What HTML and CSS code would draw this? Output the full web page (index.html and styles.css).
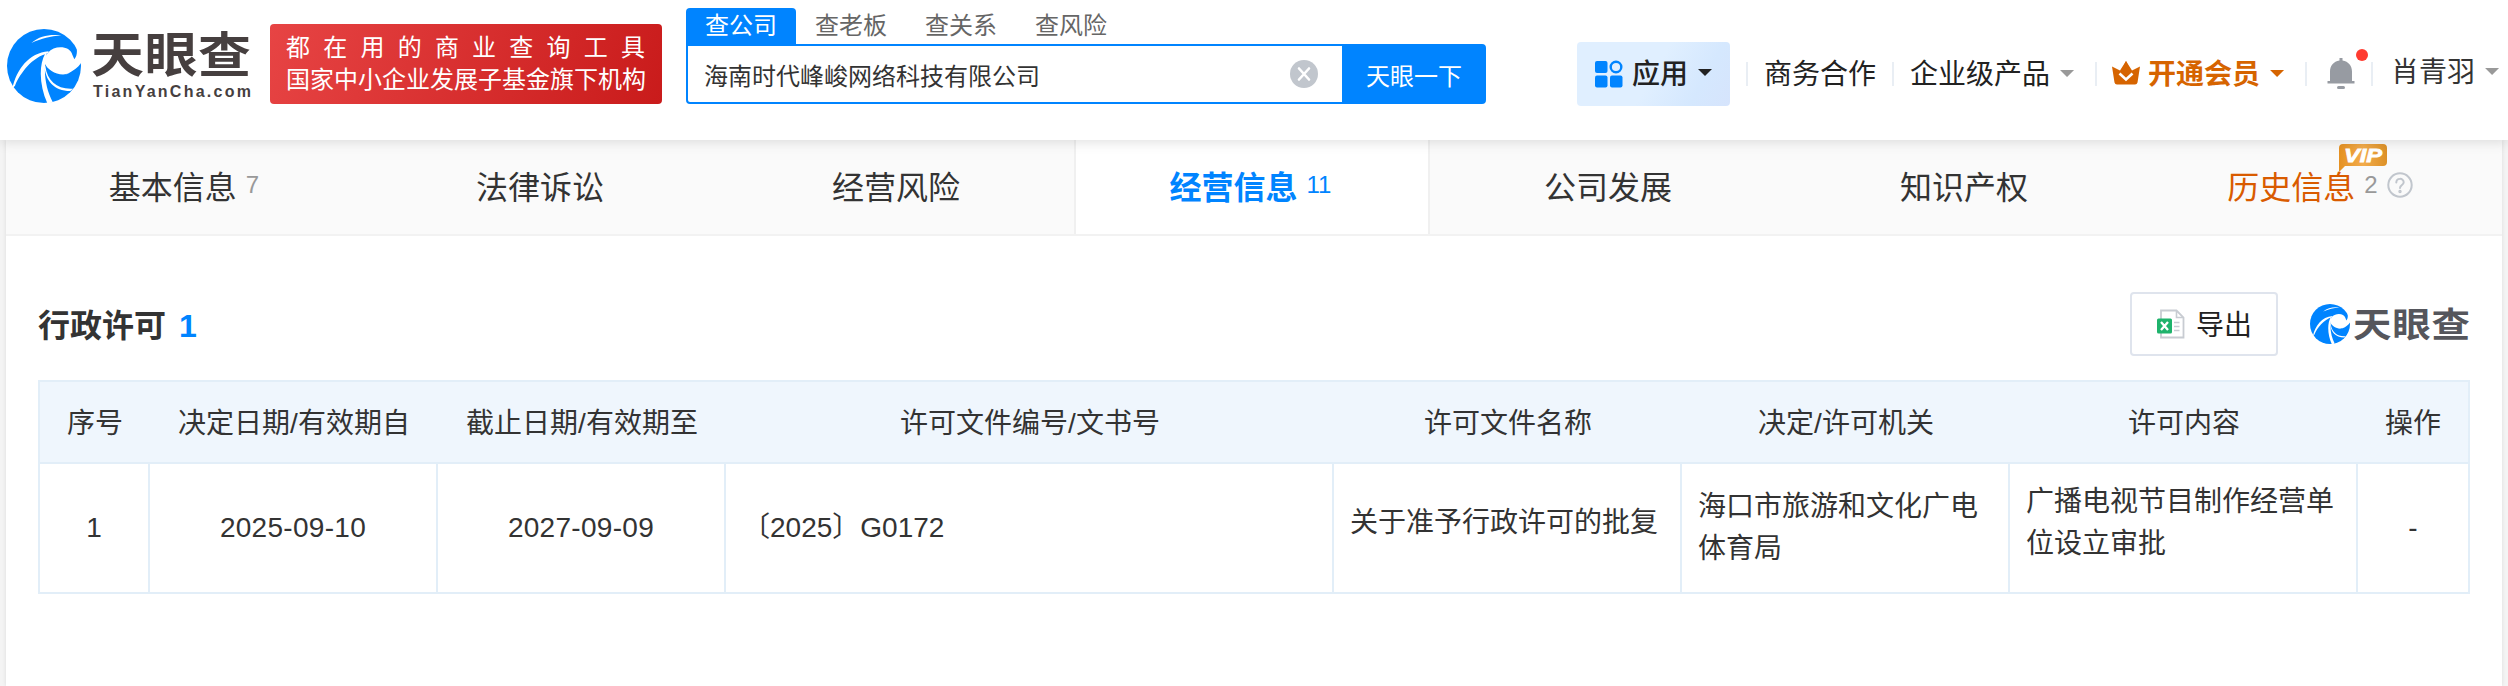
FILE: index.html
```html
<!DOCTYPE html>
<html lang="zh-CN">
<head>
  <meta charset="UTF-8" />
  <title>天眼查</title>
  <link rel="stylesheet" href="styles.css">
</head>
<body>
  <svg class="defs" width="0" height="0">
    <symbol id="mark" viewBox="21 27 222 222">
      <circle cx="132" cy="138" r="111" fill="#0084ff" />
      <path fill="#fff" d="M144 98C164 74 211 78 217 104L223 118C230 109 232 98 230 84L250 84L246 124C238 140 222 152 202 162C174 170 142 150 134 130C134 115 138 105 144 98Z" />
      <path fill="#fff" d="M94 69C120 46 150 43 184 46C150 49 126 55 94 69Z" />
      <path fill="#fff" d="M37 206C50 148 86 99 146 94L144 100C96 112 62 158 45 197Z" />
      <path fill="#fff" d="M136 100C114 140 120 202 143 252L158 246C136 204 128 150 141 104Z" />
      <path fill="#fff" d="M136 138C142 184 172 209 219 206L211 213C162 212 136 184 133 134Z" />
      <path fill="#0084ff" d="M148 160C170 170 190 168 206 158L184 174C172 174 158 170 148 160Z" />
    </symbol>
  </svg>

  <header class="header">
    <div class="logo">
      <svg class="logo-mark" width="74" height="74"><use href="#mark" /></svg>
      <svg class="logo-text" width="160" height="76" viewBox="0 0 160 76">
        <text class="logo-cn" transform="translate(0 43) scale(1 .9)" x="-2" y="0" textLength="160">天眼查</text>
        <text class="logo-en" x="0" y="68" textLength="158">TianYanCha.com</text>
      </svg>
    </div>

    <div class="slogan">
      <div class="slogan-line">都 在 用 的 商 业 查 询 工 具</div>
      <div class="slogan-line">国家中小企业发展子基金旗下机构</div>
    </div>

    <div class="search">
      <div class="search-tabs">
        <span class="search-tab active">查公司</span>
        <span class="search-tab">查老板</span>
        <span class="search-tab">查关系</span>
        <span class="search-tab">查风险</span>
      </div>
      <div class="search-box">
        <span class="search-value">海南时代峰峻网络科技有限公司</span>
        <svg class="clear" width="28" height="28" viewBox="0 0 28 28">
          <circle cx="14" cy="14" r="14" fill="#c1c6cd" />
          <path d="M9 8.500L19 19.500M19 8.500L9 19.500" stroke="#fff" stroke-width="2.600" stroke-linecap="round" />
        </svg>
        <button class="search-btn">天眼一下</button>
      </div>
    </div>

    <nav class="nav">
      <div class="apps">
        <svg width="28" height="28" viewBox="0 0 28 28" fill="#0084ff">
          <rect x="0" y="1" width="12.500" height="12" rx="2" />
          <rect x="0" y="15.500" width="12.500" height="12" rx="2" />
          <rect x="15" y="15.500" width="12.500" height="12" rx="2" />
          <circle cx="21" cy="7" r="5.300" fill="none" stroke="#0084ff" stroke-width="2.400" />
        </svg>
        <span class="apps-label">应用</span>
        <i class="caret dark"></i>
      </div>
      <i class="divider"></i>
      <span class="nav-item">商务合作</span>
      <i class="divider"></i>
      <span class="nav-item">企业级产品<i class="caret"></i></span>
      <i class="divider"></i>
      <span class="nav-item vip-item">
        <svg class="crown" width="28" height="24" viewBox="0 0 28 24">
          <path fill="#d66400" d="M0 5.500L8 9.500L14 0L20 9.500L28 5.500L25.500 21.500Q25 23.500 23 23.500H5Q3 23.500 2.500 21.500Z" />
          <path fill="none" stroke="#fff" stroke-width="2.600" d="M7.500 12.500L14 18.500L20.500 12.500" />
          <path fill="#d66400" d="M14 0L19 11L14 16L9 11Z" />
        </svg>开通会员<i class="caret orange"></i>
      </span>
      <i class="divider"></i>
      <span class="bell">
        <svg width="28" height="32" viewBox="0 0 28 32" fill="#979ba2">
          <path d="M12.500 0H15.500V2.500C21.500 3.500 25 8 25 13.500V23H27.500V25.500H.500V23H3V13.500C3 8 6.500 3.500 12.500 2.500Z" />
          <rect x="10" y="28" width="8" height="3" rx="1.500" />
        </svg>
        <i class="dot"></i>
      </span>
      <i class="divider"></i>
      <span class="nav-item user">肖青羽<i class="caret"></i></span>
    </nav>
  </header>

  <main class="content">
    <div class="tabs">
      <div class="tab">基本信息<span class="count">7</span></div>
      <div class="tab">法律诉讼</div>
      <div class="tab">经营风险</div>
      <div class="tab active">经营信息<span class="count">11</span></div>
      <div class="tab">公司发展</div>
      <div class="tab">知识产权</div>
      <div class="tab history">
        历史信息
        <span class="count">2</span>
        <svg class="help" width="26" height="26" viewBox="0 0 26 26" fill="none" stroke="#c1c6cd" stroke-width="2">
          <circle cx="13" cy="13" r="11.700" />
          <path d="M9.300 10.500C9.300 5.700 16.700 5.700 16.700 10.300C16.700 13 13 13 13 16" stroke-linecap="round" />
          <circle cx="13" cy="19.500" r=".700" />
        </svg>
        <svg class="vip" width="48" height="28" viewBox="0 0 48 28">
          <defs>
            <linearGradient id="gold" x1="0" x2="1">
              <stop offset="0" stop-color="#e59122" />
              <stop offset=".5" stop-color="#f2ab4c" />
              <stop offset="1" stop-color="#dd9127" />
            </linearGradient>
          </defs>
          <path fill="url(#gold)" d="M4 0H44Q48 0 48 4V18Q48 22 44 22H6L0 28V4Q0 0 4 0Z" />
          <text class="vip-text" x="5" y="18" textLength="38" lengthAdjust="spacingAndGlyphs">VIP</text>
        </svg>
      </div>
    </div>

    <section class="section">
      <div class="section-head">
        <h2>行政许可<span class="total">1</span></h2>
        <button class="export">
          <svg width="28" height="30" viewBox="0 0 28 30">
            <path fill="#fff" stroke="#c8ccd2" stroke-width="1.800" d="M4 1.500H19.500L26.500 8.500V28.500H4Z" />
            <path fill="none" stroke="#c8ccd2" stroke-width="1.600" d="M19.500 2V8.500H26" />
            <path stroke="#c8ccd2" stroke-width="1.500" d="M17 13.500H22.500M17 17.500H22.500M17 21.500H22.500" />
            <rect y="9.500" width="15" height="15" rx="1.500" fill="#1fb36c" />
            <path stroke="#fff" stroke-width="2.300" d="M4 13L11 21M11 13L4 21" />
          </svg>
          <span class="export-label">导出</span>
        </button>
        <svg class="brand-mark" width="40" height="40"><use href="#mark" /></svg>
        <svg class="brand-text" width="116" height="36" viewBox="0 0 116 36">
          <text class="brand-cn" transform="translate(0 31) scale(1 .9)" x="-2" y="0" textLength="117">天眼查</text>
        </svg>
      </div>

      <table class="license">
        <colgroup>
          <col class="c-index"><col class="c-date"><col class="c-date"><col class="c-number">
          <col class="c-name"><col class="c-office"><col class="c-scope"><col class="c-action">
        </colgroup>
        <thead>
          <tr>
            <th>序号</th>
            <th>决定日期/有效期自</th>
            <th>截止日期/有效期至</th>
            <th>许可文件编号/文书号</th>
            <th>许可文件名称</th>
            <th>决定/许可机关</th>
            <th>许可内容</th>
            <th>操作</th>
          </tr>
        </thead>
        <tbody>
          <tr>
            <td class="center">1</td>
            <td class="center date">2025-09-10</td>
            <td class="center date">2027-09-09</td>
            <td>〔2025〕G0172</td>
            <td class="name">关于准予行政许可的批复</td>
            <td>海口市旅游和文化广电体育局</td>
            <td class="scope">广播电视节目制作经营单位设立审批</td>
            <td class="center">-</td>
          </tr>
        </tbody>
      </table>
    </section>
  </main>
</body>
</html>
```

FILE: styles.css
```css
* {
  margin: 0;
  padding: 0;
  box-sizing: border-box;
}
body {
  font-family: "Liberation Sans", "Noto Sans CJK SC", sans-serif;
  font-size: 28px;
  color: #333;
  background: #f4f4f4;
  height: 686px;
  overflow: hidden;
}
button {
  font-family: inherit;
  border: none;
}
.defs {
  display: block;
}

/* header */
.header {
  position: relative;
  z-index: 1;
  display: flex;
  align-items: flex-start;
  height: 140px;
  padding-left: 7px;
  background: #fff;
  box-shadow: 0 2px 12px rgba(0, 0, 0, 0.13);
}
.logo {
  display: flex;
  width: 263px;
  padding-top: 29px;
}
.logo-text {
  margin-left: 12px;
  overflow: visible;
}
.logo-cn {
  font-family: "Noto Sans CJK SC", sans-serif;
  font-size: 53px;
  font-weight: 700;
  fill: #463f3f;
}
.logo-en {
  font-size: 16px;
  font-weight: 700;
  fill: #463f3f;
}
.slogan {
  width: 392px;
  height: 80px;
  margin-top: 24px;
  padding: 8px 17px 0 16px;
  border-radius: 4px;
  background: linear-gradient(110deg, #e74444, #c91b1b);
  color: #fff;
  font-size: 24px;
}
.slogan-line {
  height: 32px;
  line-height: 32px;
  white-space: nowrap;
  text-align: justify;
  text-align-last: justify;
}
.search {
  width: 800px;
  margin: 8px 0 0 24px;
}
.search-tabs {
  display: flex;
  height: 36px;
}
.search-tab {
  width: 110px;
  line-height: 36px;
  text-align: center;
  font-size: 24px;
  color: #666;
}
.search-tab.active {
  color: #fff;
  background: #0084ff;
  border-radius: 4px 4px 0 0;
}
.search-box {
  display: flex;
  align-items: center;
  height: 60px;
  border: 2px solid #0084ff;
  border-radius: 0 4px 4px 4px;
  font-size: 24px;
}
.search-value {
  flex: 1;
  padding-left: 16px;
}
.clear {
  margin-right: 24px;
}
.search-btn {
  width: 142px;
  height: 56px;
  padding-left: 2px;
  background: #0084ff;
  color: #fff;
  font-size: 24px;
}
.nav {
  display: flex;
  align-items: center;
  height: 64px;
  margin: 42px 0 0 91px;
  line-height: 40px;
  color: #222;
  white-space: nowrap;
}
.apps {
  display: flex;
  align-items: center;
  width: 153px;
  height: 64px;
  padding-left: 18px;
  border-radius: 4px;
  background: linear-gradient(120deg, #e0efff 50%, #d5e8fe 78%, #d6e4fc);
}
.apps-label {
  margin-left: 9px;
  padding-top: 1px;
  font-weight: 500;
}
.divider {
  width: 2px;
  height: 24px;
  margin: 0 16px;
  background: #e9eef4;
}
.nav-item {
  display: flex;
  align-items: center;
  padding-top: 2px;
}
.caret {
  width: 14px;
  height: 7px;
  margin: -3px 5px 0 10px;
  background: #999;
  clip-path: polygon(0 0, 100% 0, 50% 100%);
}
.caret.dark {
  background: #222;
}
.caret.orange {
  background: #d66400;
}
.vip-item {
  margin-left: -1px;
  color: #d66400;
  font-weight: 700;
}
.crown {
  margin-right: 8px;
  margin-top: -4px;
}
.bell {
  position: relative;
  display: flex;
  margin-left: 4px;
}
.dot {
  position: absolute;
  left: 29px;
  top: -9px;
  width: 12px;
  height: 12px;
  border-radius: 50%;
  background: #ff3b30;
}
.user {
  margin-top: -4px;
  margin-left: 2px;
  color: #333;
}

/* tabs */
.content {
  width: 2496px;
  height: 546px;
  margin-left: 6px;
  background: #fff;
  box-shadow: 0 0 4px rgba(0, 0, 0, 0.1);
}
.tabs {
  display: flex;
  height: 96px;
  background: #fafafa;
  border-bottom: 2px solid #f2f2f2;
}
.tab {
  display: flex;
  align-items: center;
  justify-content: center;
  width: 356px;
  padding-bottom: 4px;
  font-size: 32px;
}
.tab.active {
  padding-right: 3px;
  background: #fff;
  color: #0084ff;
  font-weight: 700;
  border-left: 2px solid #f0f0f0;
  border-right: 2px solid #f0f0f0;
}
.count {
  margin-left: 9px;
  font-size: 24px;
  font-weight: 400;
  color: #999;
}
.active .count {
  color: #0084ff;
}
.history {
  position: relative;
  color: #d95b00;
}
.help {
  margin-left: 9px;
}
.vip {
  position: absolute;
  left: 197px;
  top: 4px;
}
.vip-text {
  font-size: 19px;
  font-weight: 700;
  font-style: italic;
  fill: #fff;
  stroke: #fff;
  stroke-width: 0.8px;
}

/* license table */
.section {
  padding: 56px 32px 0;
}
.section-head {
  display: flex;
  align-items: center;
  height: 64px;
  margin-bottom: 24px;
}
h2 {
  flex: 1;
  padding-top: 3px;
  font-size: 32px;
  line-height: 48px;
}
.total {
  margin-left: 13px;
  color: #0084ff;
}
.export {
  display: flex;
  align-items: center;
  gap: 11px;
  width: 148px;
  height: 64px;
  padding-left: 25px;
  border: 2px solid #dfe4ed;
  border-radius: 4px;
  background: #fff;
  color: #222;
  font-size: 28px;
  white-space: nowrap;
}
.export-label {
  padding-bottom: 2px;
}
.brand-mark {
  margin-left: 32px;
}
.brand-text {
  margin: 0 -1px 0 5px;
  overflow: visible;
}
.brand-cn {
  font-family: "Noto Sans CJK SC", sans-serif;
  font-size: 38.5px;
  font-weight: 700;
  fill: #55565c;
}
.license {
  width: 2432px;
  table-layout: fixed;
  border-collapse: separate;
  border-spacing: 0;
  border-left: 2px solid #e2eef8;
  border-top: 2px solid #e2eef8;
}
.c-index { width: 110px; }
.c-date { width: 288px; }
.c-number { width: 608px; }
.c-name { width: 348px; }
.c-office { width: 328px; }
.c-scope { width: 348px; }
.c-action { width: 112px; }
th {
  height: 82px;
  padding-bottom: 3px;
  background: #eff6fd;
  border-bottom: 2px solid #e2eef8;
  font-weight: 400;
  white-space: nowrap;
}
th:last-child {
  border-right: 2px solid #e2eef8;
}
td {
  height: 130px;
  padding: 0 16px;
  border-right: 2px solid #e2eef8;
  border-bottom: 2px solid #e2eef8;
  line-height: 42px;
  vertical-align: middle;
}
.center {
  text-align: center;
}
.date {
  letter-spacing: 0.3px;
}
.name,
.scope {
  padding-bottom: 11px;
}
```
